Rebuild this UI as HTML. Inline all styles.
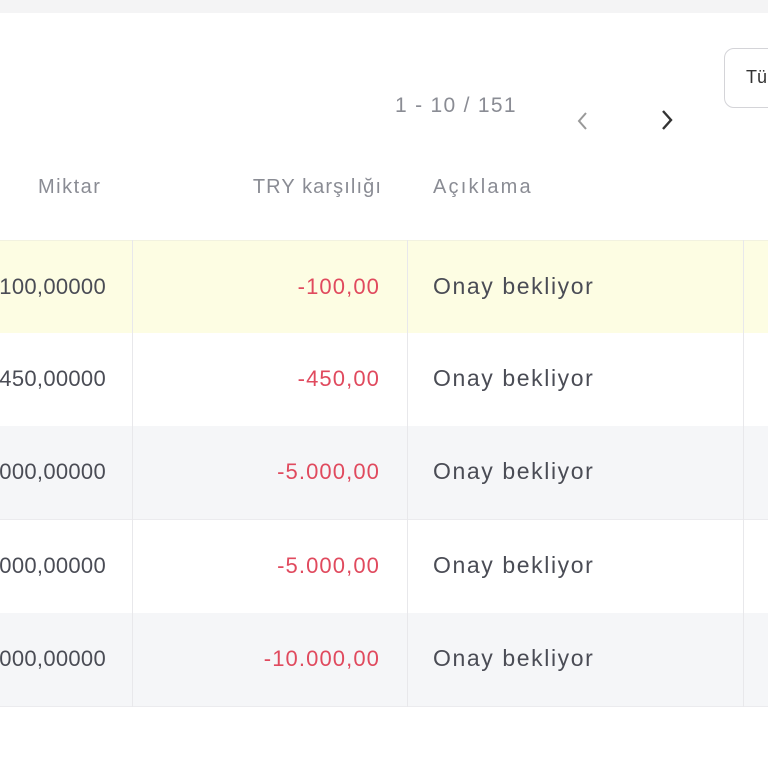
<!DOCTYPE html>
<html><head><meta charset="utf-8"><style>
body{margin:0;width:768px;height:768px;overflow:hidden;background:#fff;font-family:"Liberation Sans",sans-serif;position:relative}
.top{position:absolute;left:0;top:0;width:768px;height:13px;background:#f4f4f5}
.abs{position:absolute;white-space:nowrap}
.row{position:absolute;left:0;width:768px;height:93px;border-bottom:1px solid #ebebee}
.vl{position:absolute;top:240px;height:467px;width:1px;background:#e8e8eb}
.c{position:absolute;top:0;height:93px;line-height:91px;font-size:22px;white-space:nowrap}
.a{right:662px;color:#4a4c55;letter-spacing:0.3px}
.t{right:388px;color:#e04a5e;letter-spacing:1.1px}
.d{left:433px;color:#4a4c55;font-size:23px;letter-spacing:1.6px}
.h{font-size:20px;color:#8a8c94;top:176px}
</style></head><body>
<div class="top"></div>
<div class="abs" style="left:724px;top:48px;width:60px;height:58px;border:1px solid #d4d4d8;border-radius:10px"></div>
<div class="abs" style="left:746px;top:67px;font-size:18px;color:#333">Tü</div>
<div class="abs" style="left:395px;top:94px;font-size:21px;color:#8a8c94;letter-spacing:1.3px">1 - 10 / 151</div>
<svg class="abs" style="left:574px;top:110px" width="18" height="22"><path d="M12 3 L5 11 L12 19" stroke="#999" stroke-width="2" fill="none"/></svg>
<svg class="abs" style="left:658px;top:108px" width="18" height="24"><path d="M5 3 L13 12 L5 21" stroke="#333" stroke-width="2.4" fill="none"/></svg>
<div class="abs h" style="left:38px;letter-spacing:1.5px">Miktar</div>
<div class="abs h" style="right:386px;letter-spacing:1.1px">TRY karşılığı</div>
<div class="abs h" style="left:433px;letter-spacing:2.2px">Açıklama</div>
<div class="row" style="top:240px;background:#fdfde3;border-top:1px solid #f2f2e0"><div class="c a">100,00000</div><div class="c t">-100,00</div><div class="c d">Onay bekliyor</div></div>
<div class="row" style="top:333px;background:#fff"><div class="c a">450,00000</div><div class="c t">-450,00</div><div class="c d">Onay bekliyor</div></div>
<div class="row" style="top:426px;background:#f5f6f8"><div class="c a">000,00000</div><div class="c t">-5.000,00</div><div class="c d">Onay bekliyor</div></div>
<div class="row" style="top:520px;background:#fff"><div class="c a">000,00000</div><div class="c t">-5.000,00</div><div class="c d">Onay bekliyor</div></div>
<div class="row" style="top:613px;background:#f5f6f8"><div class="c a">000,00000</div><div class="c t">-10.000,00</div><div class="c d">Onay bekliyor</div></div>
<div class="vl" style="left:132px"></div>
<div class="vl" style="left:407px"></div>
<div class="vl" style="left:743px"></div>
</body></html>
